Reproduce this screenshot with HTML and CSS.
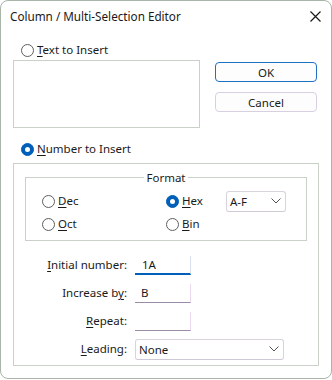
FILE: index.html
```html
<!DOCTYPE html>
<html>
<head>
<meta charset="utf-8">
<link rel="stylesheet" href="styles.css">
</head>
<body>
<div class="window">
  <div class="titlebar">
    <span class="title">Column / Multi-Selection Editor</span>
    <svg class="close" width="11" height="11" viewBox="0 0 11 11"><path d="M0.5 0.5 L10.5 10.5 M10.5 0.5 L0.5 10.5" stroke="#1a1a1a" stroke-width="1.2" fill="none"/></svg>
  </div>
  <div class="content">
    <div class="top">
      <div class="left">
        <label class="radio"><span class="dot"></span><span><u>T</u>ext to Insert</span></label>
        <div class="textbox"></div>
      </div>
      <div class="buttons">
        <div class="btn primary">OK</div>
        <div class="btn">Cancel</div>
      </div>
    </div>
    <label class="radio number"><span class="dot on"></span><span><u>N</u>umber to Insert</span></label>
    <div class="group">
      <fieldset class="format">
        <legend>Format</legend>
        <div class="fmt-grid">
          <label class="radio"><span class="dot"></span><span><u>D</u>ec</span></label>
          <label class="radio"><span class="dot on"></span><span><u>H</u>ex</span></label>
          <div class="combo small"><span>A-F</span><svg width="10" height="6" viewBox="0 0 10 6"><path d="M0.5 0.5 L5 5 L9.5 0.5" stroke="#555" fill="none"/></svg></div>
          <label class="radio"><span class="dot"></span><span><u>O</u>ct</span></label>
          <label class="radio"><span class="dot"></span><span><u>B</u>in</span></label>
        </div>
      </fieldset>
      <div class="fields">
        <span class="lbl"><u>I</u>nitial number:</span>
        <div class="input focus"><span>1A</span></div>
        <span class="lbl">Increase b<u>y</u>:</span>
        <div class="input"><span>B</span></div>
        <span class="lbl"><u>R</u>epeat:</span>
        <div class="input"></div>
        <span class="lbl"><u>L</u>eading:</span>
        <div class="combo wide"><span>None</span><svg width="10" height="6" viewBox="0 0 10 6"><path d="M0.5 0.5 L5 5 L9.5 0.5" stroke="#555" fill="none"/></svg></div>
      </div>
    </div>
  </div>
</div>
</body>
</html>
```

FILE: styles.css
```css
* { box-sizing: border-box; }
html, body { margin: 0; padding: 0; background: #ffffff; }
body {
  font-family: "Noto Sans", "Open Sans", sans-serif;
  font-size: 11.5px;
  color: #1a1a1a;
  width: 332px;
  height: 380px;
  overflow: hidden;
}
u { text-decoration: underline; text-underline-offset: 2px; text-decoration-thickness: 1px; }
.window {
  width: 332px;
  height: 379px;
  border: 1px solid #a9b5a9;
  border-radius: 8px;
  background: #fff;
}
.titlebar {
  height: 29px;
  display: flex;
  align-items: center;
  justify-content: space-between;
  padding: 0 10px 0 9px;
}
.title { font-size: 11.7px; color: #1a1a1a; }
.close { margin-top: 1px; }
.content { padding: 0 0 0 12px; }
.top { display: flex; }
.left { width: 187px; padding-top: 12px; }
.radio {
  display: flex;
  align-items: center;
  height: 16px;
  line-height: 16px;
  white-space: nowrap;
}
.left > .radio, .number { padding-left: 8px; }
.dot {
  width: 13px;
  height: 13px;
  border: 1px solid #5e5e5e;
  border-radius: 50%;
  background: #fff;
  margin-right: 3px;
  flex: none;
  display: flex;
  align-items: center;
  justify-content: center;
}
.dot.on { background: #005fb8; border-color: #005fb8; }
.dot.on::after {
  content: "";
  width: 5px;
  height: 5px;
  border-radius: 50%;
  background: #fff;
}
.textbox {
  margin-top: 2px;
  height: 68px;
  border: 1px solid #c9d1c9;
}
.buttons { margin-left: 15px; padding-top: 32px; width: 102px; }
.btn {
  height: 20px;
  border: 1px solid #d8cfe0;
  border-radius: 4px;
  display: flex;
  align-items: center;
  justify-content: center;
  margin-bottom: 10px;
  background: #fdfdfd;
}
.btn.primary { border-color: #1f6fc5; }
.number { margin-top: 13px; }
.group {
  margin-top: 6px;
  width: 306px;
  height: 203px;
  border: 1px solid #c9d1c9;
  padding: 5px 0 0 11px;
}
.format {
  margin: 0;
  padding: 0;
  width: 282px;
  height: 72px;
  border: 1px solid #c9d1c9;
  min-width: 0;
}
.format legend {
  margin: 0 auto;
  padding: 0 2px;
  line-height: 17px;
}
.fmt-grid {
  display: grid;
  grid-template-columns: 124px 60px 60px;
  grid-auto-rows: 16px;
  row-gap: 7px;
  padding: 7px 0 0 16px;
  align-items: center;
}
.combo {
  height: 21px;
  border: 1px solid #d9d3dd;
  border-bottom-color: #cfc8d6;
  border-radius: 3px;
  display: flex;
  align-items: center;
  justify-content: space-between;
  padding: 0 4px 0 3px;
}
.combo.small { width: 60px; }
.combo.wide { width: 149px; height: 21px; }
.fields {
  display: grid;
  grid-template-columns: 102px 149px;
  column-gap: 8px;
  grid-auto-rows: 20px;
  row-gap: 8px;
  margin-top: 14px;
  align-items: center;
}
.lbl { text-align: right; line-height: 16px; white-space: nowrap; }
.input {
  width: 56px;
  height: 19px;
  border-right: 1px solid #ecd9f0;
  border-bottom: 1px solid #9a8ca6;
  display: flex;
  align-items: center;
  padding-left: 6px;
}
.input.focus { border-bottom: 2px solid #005fb8; border-right-color: #d8e0ee; padding-left: 7px; }
```
